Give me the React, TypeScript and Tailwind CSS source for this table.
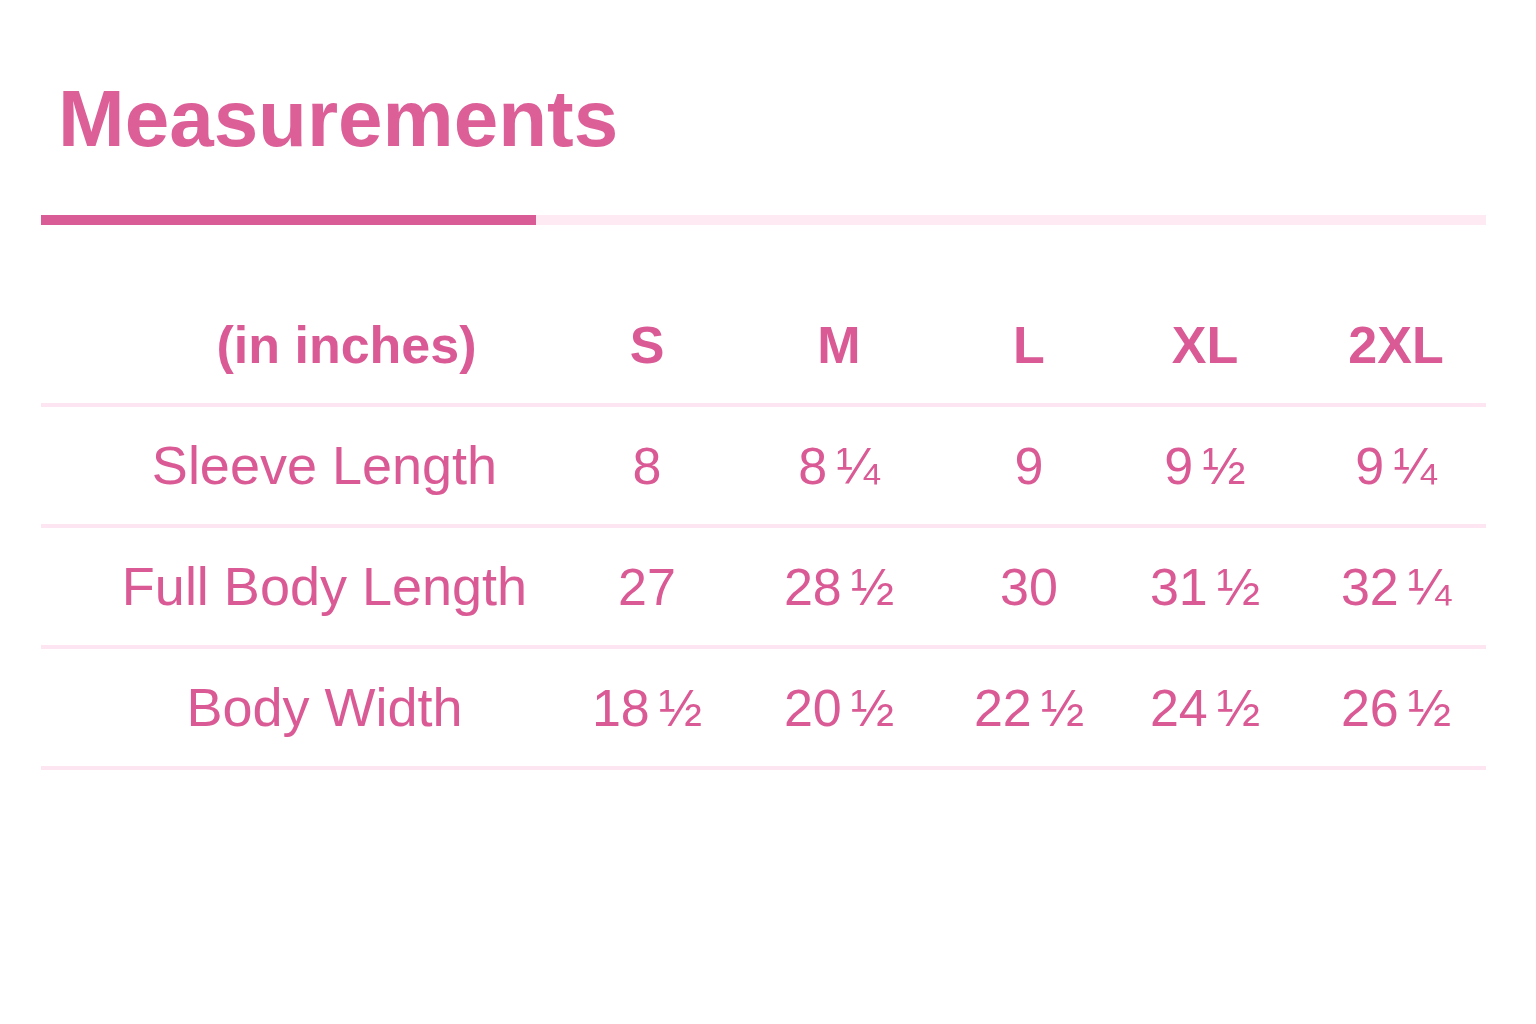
const rows = [
  { label: "Sleeve Length", values: [["8", ""], ["8", "¼"], ["9", ""], ["9", "½"], ["9", "¼"]] },
  { label: "Full Body Length", values: [["27", ""], ["28", "½"], ["30", ""], ["31", "½"], ["32", "¼"]] },
  { label: "Body Width", values: [["18", "½"], ["20", "½"], ["22", "½"], ["24", "½"], ["26", "½"]] },
];

const sizes = ["S", "M", "L", "XL", "2XL"];

// column widths tuned so each size column centres where the reference has it
const gridCols = "grid grid-cols-[511px_190px_194px_186px_166px_198px]";

export default function App() {
  return (
    <div className="min-h-screen w-full bg-white text-[#da5a95] font-['Liberation_Sans',Arial,sans-serif]">
      <div className="pl-[41px] pr-[50px] pt-[79px]">
        {/* Title */}
        <h1 className="pl-[17px] text-[80px] font-bold leading-none text-[#dc5f98]">
          Measurements
        </h1>

        {/* Accent bar */}
        <div className="mt-[56px] flex h-[10px] w-full">
          <div className="w-[495px] bg-[#da5c96]" />
          <div className="flex-1 bg-[#fdeaf3]" />
        </div>

        {/* Table */}
        <div className="mt-[61px]">
          <div className={`${gridCols} h-[121px] items-center border-b-4 border-[#fde6f1] text-[52px] font-bold`}>
            <div className="pl-[100px] text-center">(in inches)</div>
            {sizes.map((s, i) => (
              <div key={s} className={`text-center ${i === 4 ? "pl-[18px]" : ""}`}>
                {s}
              </div>
            ))}
          </div>

          {rows.map((row) => (
            <div
              key={row.label}
              className={`${gridCols} h-[121px] items-center border-b-4 border-[#fde6f1] text-[52px]`}
            >
              <div className="pl-[56px] text-center text-[54px]">{row.label}</div>
              {row.values.map(([whole, frac], i) => (
                <div key={i} className={`text-center ${i === 4 ? "pl-[18px]" : ""}`}>
                  {whole}
                  {frac && <span className="ml-[9px]">{frac}</span>}
                </div>
              ))}
            </div>
          ))}
        </div>
      </div>
    </div>
  );
}
